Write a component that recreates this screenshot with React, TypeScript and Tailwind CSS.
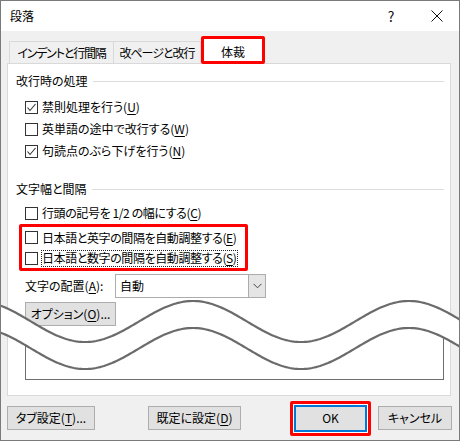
import React from "react";

const font = "font-['Noto_Sans_CJK_JP','Noto_Sans',sans-serif] [font-feature-settings:'palt']";

// wave break drawn over the dialog
const upper = (x: number) => 321.5 - 20.5 * Math.cos((2 * Math.PI * (x - 193)) / 216);
const xs: number[] = [];
for (let x = -6; x <= 466; x += 2) xs.push(x);
const upperPath = xs.map((x, i) => `${i ? "L" : "M"}${x},${upper(x).toFixed(2)}`).join(" ");
const lowerPath = xs.map((x, i) => `${i ? "L" : "M"}${x},${(upper(x) + 27).toFixed(2)}`).join(" ");
const bandPath =
  upperPath +
  " " +
  [...xs].reverse().map((x) => `L${x},${(upper(x) + 27).toFixed(2)}`).join(" ") +
  " Z";

function Checkbox({ checked }: { checked?: boolean }) {
  return (
    <span className="flex h-[13px] w-[13px] shrink-0 items-center justify-center border border-[#333333] bg-white">
      {checked && (
        <svg width="11" height="11" viewBox="0 0 11 11">
          <polyline points="1.5,5.5 4,8.5 9.5,2" fill="none" stroke="#333333" strokeWidth="1.1" />
        </svg>
      )}
    </span>
  );
}

function Row({
  checked,
  text,
  k,
  focus,
  tight,
  h = "h-[22px]",
}: {
  checked?: boolean;
  text: string;
  k: string;
  focus?: boolean;
  tight?: boolean;
  h?: string;
}) {
  return (
    <div className={`flex ${h} items-center whitespace-nowrap`}>
      <Checkbox checked={checked} />
      <span
        className={`ml-[3px] flex h-[17px] shrink-0 items-center border leading-none ${
          focus ? "border-dotted border-[#222]" : "border-transparent"
        } ${tight ? "tracking-[-0.4px]" : ""}`}
      >
        {text}(<u className="underline-offset-2">{k}</u>)
      </span>
    </div>
  );
}

function Header({ text }: { text: string }) {
  return (
    <div className="flex h-[18px] items-center">
      <span className="leading-none">{text}</span>
      <span className="ml-[5px] h-px flex-1 bg-[#dcdcdc]" />
    </div>
  );
}

function Button({ w, children }: { w: string; children: React.ReactNode }) {
  return (
    <div className={`flex h-[24px] ${w} items-center justify-center whitespace-nowrap border border-[#adadad] bg-[#e1e1e1] leading-none`}>
      {children}
    </div>
  );
}

export default function App() {
  return (
    <div
      className={`relative flex h-[441px] w-[460px] flex-col overflow-hidden border border-[#7a7a7a] bg-[#f0f0f0] text-[12px] text-black ${font}`}
    >
      {/* title bar */}
      <div className="flex h-[30px] shrink-0 items-center bg-white pl-[9px]">
        <span className="leading-none">段落</span>
        <span className="ml-auto w-[20px] text-center text-[14px] leading-none text-[#111]">?</span>
        <span className="ml-[13px] flex w-[45px] items-center justify-center">
          <svg width="12" height="12" viewBox="0 0 12 12">
            <path d="M0.5 0.5 L11.5 11.5 M11.5 0.5 L0.5 11.5" stroke="#111" strokeWidth="1" />
          </svg>
        </span>
      </div>

      {/* tabs */}
      <div className="flex h-[32px] shrink-0 items-end whitespace-nowrap pl-[8px]">
        <div className="flex h-[22px] w-[105px] items-center justify-center border-x border-t border-[#d9d9d9] leading-none tracking-[-1.2px]">
          インデントと行間隔
        </div>
        <div className="-ml-px flex h-[22px] w-[88px] items-center justify-center border-x border-t border-[#d9d9d9] leading-none tracking-[-1px]">
          改ページと改行
        </div>
        <div className="relative z-10 -mb-px flex h-[28px] w-[64px] items-center justify-center rounded-[2px] border-[3px] border-[#ff0000] bg-white pt-[3px] leading-none">
          体裁
        </div>
      </div>

      {/* panel */}
      <div className="ml-[6px] flex h-[333px] w-[444px] shrink-0 flex-col border border-[#d9d9d9] bg-white pl-[8px] pr-[6px] pt-[8px]">
        <Header text="改行時の処理" />
        <div className="mt-[6px] pl-[9px]">
          <Row checked text="禁則処理を行う" k="U" />
          <Row text="英単語の途中で改行する" k="W" />
          <Row checked text="句読点のぶら下げを行う" k="N" />
        </div>
        <div className="mt-[18px]">
          <Header text="文字幅と間隔" />
        </div>
        <div className="mt-[4px] pl-[9px]">
          <Row text="行頭の記号を 1/2 の幅にする" k="C" tight />
        </div>
        <div className="ml-[3px] flex h-[47px] w-[229px] flex-col rounded-[2px] border-[3px] border-[#ff0000] pl-[3px]">
          <Row text="日本語と英字の間隔を自動調整する" k="E" h="h-[21px]" tight />
          <Row text="日本語と数字の間隔を自動調整する" k="S" h="h-[20px]" focus tight />
        </div>
        <div className="mt-[3px] flex h-[24px] items-center whitespace-nowrap pl-[9px]">
          <span className="w-[90px] leading-none">
            文字の配置(<u className="underline-offset-2">A</u>):
          </span>
          <div className="flex h-[24px] w-[151px] border border-[#acacac] bg-white">
            <span className="flex flex-1 items-center pl-[4px] leading-none">自動</span>
            <span className="flex w-[17px] items-center justify-center border-l border-[#acacac] bg-[#e5e5e5]">
              <svg width="9" height="6" viewBox="0 0 9 6">
                <polyline points="0.5,0.8 4.5,4.8 8.5,0.8" fill="none" stroke="#444" strokeWidth="1" />
              </svg>
            </span>
          </div>
        </div>
        <div className="mt-[4px] pl-[9px]">
          <Button w="w-[91px]">
            オプション(<u className="underline-offset-2">O</u>)...
          </Button>
        </div>
        <div className="ml-[9px] mt-[4px] h-[50px] border-x border-b border-[#6e6e6e]" />
      </div>

      {/* buttons */}
      <div className="flex h-[44px] shrink-0 items-center pl-[6px]">
        <Button w="w-[88px]">
          タブ設定(<u className="underline-offset-2">T</u>)...
        </Button>
        <div className="ml-[53px]">
          <Button w="w-[93px]">
            既定に設定(<u className="underline-offset-2">D</u>)
          </Button>
        </div>
        <div className="ml-[49px] h-[35px] w-[81px] rounded-[2px] border-[3px] border-[#ff0000] bg-white p-px">
          <div className="flex h-full w-full items-center justify-center border-2 border-[#0078d7] bg-[#e1e1e1] leading-none">
            OK
          </div>
        </div>
        <div className="ml-[7px]">
          <Button w="w-[74px]">キャンセル</Button>
        </div>
      </div>

      {/* wave break */}
      <svg
        className="pointer-events-none absolute left-[-1px] top-[-1px]"
        width="460"
        height="441"
        viewBox="0 0 460 441"
      >
        <path d={bandPath} fill="#ffffff" />
        <path d={upperPath} fill="none" stroke="#6b6b6b" strokeWidth="2.2" />
        <path d={lowerPath} fill="none" stroke="#6b6b6b" strokeWidth="2.2" />
      </svg>
    </div>
  );
}
